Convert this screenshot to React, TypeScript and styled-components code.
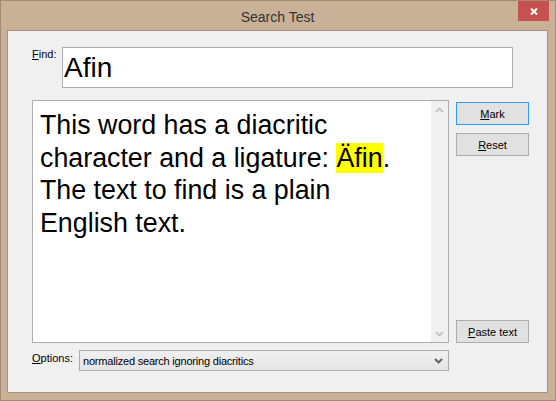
import styled, { createGlobalStyle } from 'styled-components'

const GlobalStyle = createGlobalStyle`
  html, body {
    margin: 0;
    padding: 0;
    background: #ffffff;
  }
  body {
    font-family: "Liberation Sans", Arial, sans-serif;
  }
`

const Window = styled.div`
  box-sizing: border-box;
  width: 556px;
  height: 401px;
  display: flex;
  flex-direction: column;
  padding: 0 7px 7px 6px;
  border: 1px solid #a08b75;
  background: #c9b197;
`

const TitleBar = styled.div`
  height: 29px;
  display: grid;
  grid-template-columns: 1fr auto 1fr;
  align-items: center;
`

const Title = styled.div`
  grid-column: 2;
  font-size: 14px;
  color: #333333;
  padding-top: 2px;
`

const CloseButton = styled.div`
  grid-column: 3;
  justify-self: end;
  align-self: start;
  width: 31px;
  height: 20px;
  margin-right: -1px;
  display: flex;
  align-items: center;
  justify-content: center;
  background: #c75050;
`

const Client = styled.div`
  flex: 1;
  display: flex;
  flex-direction: column;
  padding: 16px 0 0 24px;
  border: 1px solid #a8947e;
  background: #f0f0f0;
`

const Row = styled.div<{ $gap?: number; $mt?: number }>`
  display: flex;
  align-items: flex-start;
  gap: ${(p) => p.$gap ?? 0}px;
  margin-top: ${(p) => p.$mt ?? 0}px;
`

const Label = styled.div<{ $width: number; $pt?: number }>`
  width: ${(p) => p.$width}px;
  padding-top: ${(p) => p.$pt ?? 0}px;
  font-size: 11px;
  line-height: 13px;
  color: #000000;
  white-space: nowrap;
`

const TextBox = styled.div`
  box-sizing: border-box;
  width: 451px;
  height: 41px;
  padding: 0 1px;
  border: 1px solid #abadb3;
  background: #ffffff;
  font-size: 28px;
  line-height: 39px;
  color: #000000;
`

const TextArea = styled.div`
  box-sizing: border-box;
  width: 417px;
  height: 243px;
  margin-top: 12px;
  display: flex;
  border: 1px solid #abadb3;
  background: #ffffff;
`

const TextContent = styled.div`
  flex: 1;
  padding: 8px 0 0 7px;
  font-size: 26.8px;
  line-height: 32.5px;
  color: #000000;
  white-space: nowrap;
`

const Highlight = styled.span`
  background: #ffff00;
`

const ScrollBar = styled.div`
  width: 17px;
  display: flex;
  flex-direction: column;
  justify-content: space-between;
  background: #f0f0f0;
`

const ScrollArrow = styled.div`
  height: 17px;
  display: flex;
  align-items: center;
  justify-content: center;
`

const ButtonColumn = styled.div`
  width: 73px;
  height: 243px;
  margin-top: 12px;
  padding-top: 2px;
  box-sizing: border-box;
  display: flex;
  flex-direction: column;
  gap: 8px;
`

const Button = styled.div<{ $default?: boolean; $bottom?: boolean }>`
  box-sizing: border-box;
  height: 23px;
  display: flex;
  align-items: center;
  justify-content: center;
  margin-top: ${(p) => (p.$bottom ? 'auto' : '0')};
  border: 1px solid ${(p) => (p.$default ? '#3399ff' : '#adadad')};
  background: #e1e1e1;
  font-size: 11px;
  color: #000000;
`

const Select = styled.div`
  box-sizing: border-box;
  width: 370px;
  height: 21px;
  display: flex;
  align-items: center;
  justify-content: space-between;
  padding: 0 5px 0 3px;
  border: 1px solid #acacac;
  background: linear-gradient(#f0f0f0, #e5e5e5);
  font-size: 11px;
  letter-spacing: -0.2px;
  color: #000000;
`

const Chevron = ({ up, color }: { up?: boolean; color: string }) => (
  <svg width="9" height="6" viewBox="0 0 9 6">
    <path
      d={up ? 'M1 5 L4.5 1.5 L8 5' : 'M1 1 L4.5 4.5 L8 1'}
      fill="none"
      stroke={color}
      strokeWidth="1.8"
    />
  </svg>
)

export default function App() {
  return (
    <>
      <GlobalStyle />
      <Window>
        <TitleBar>
          <Title>Search Test</Title>
          <CloseButton>
            <svg width="8" height="7" viewBox="0 0 8 7">
              <path d="M1 0.5 L7 6.5 M7 0.5 L1 6.5" stroke="#ffffff" strokeWidth="2" />
            </svg>
          </CloseButton>
        </TitleBar>
        <Client>
          <Row>
            <Label $width={30} $pt={1}>
              <u>F</u>ind:
            </Label>
            <TextBox>Afin</TextBox>
          </Row>
          <Row $gap={7}>
            <TextArea>
              <TextContent>
                This word has a diacritic
                <br />
                character and a ligature: <Highlight>Äfin</Highlight>.
                <br />
                The text to find is a plain
                <br />
                English text.
              </TextContent>
              <ScrollBar>
                <ScrollArrow>
                  <Chevron up color="#c2c2c2" />
                </ScrollArrow>
                <ScrollArrow>
                  <Chevron color="#c2c2c2" />
                </ScrollArrow>
              </ScrollBar>
            </TextArea>
            <ButtonColumn>
              <Button $default>
                <span>
                  <u>M</u>ark
                </span>
              </Button>
              <Button>
                <span>
                  <u>R</u>eset
                </span>
              </Button>
              <Button $bottom>
                <span>
                  <u>P</u>aste text
                </span>
              </Button>
            </ButtonColumn>
          </Row>
          <Row $mt={7}>
            <Label $width={47} $pt={2}>
              <u>O</u>ptions:
            </Label>
            <Select>
              <span>normalized search ignoring diacritics</span>
              <Chevron color="#5a5a5a" />
            </Select>
          </Row>
        </Client>
      </Window>
    </>
  )
}
